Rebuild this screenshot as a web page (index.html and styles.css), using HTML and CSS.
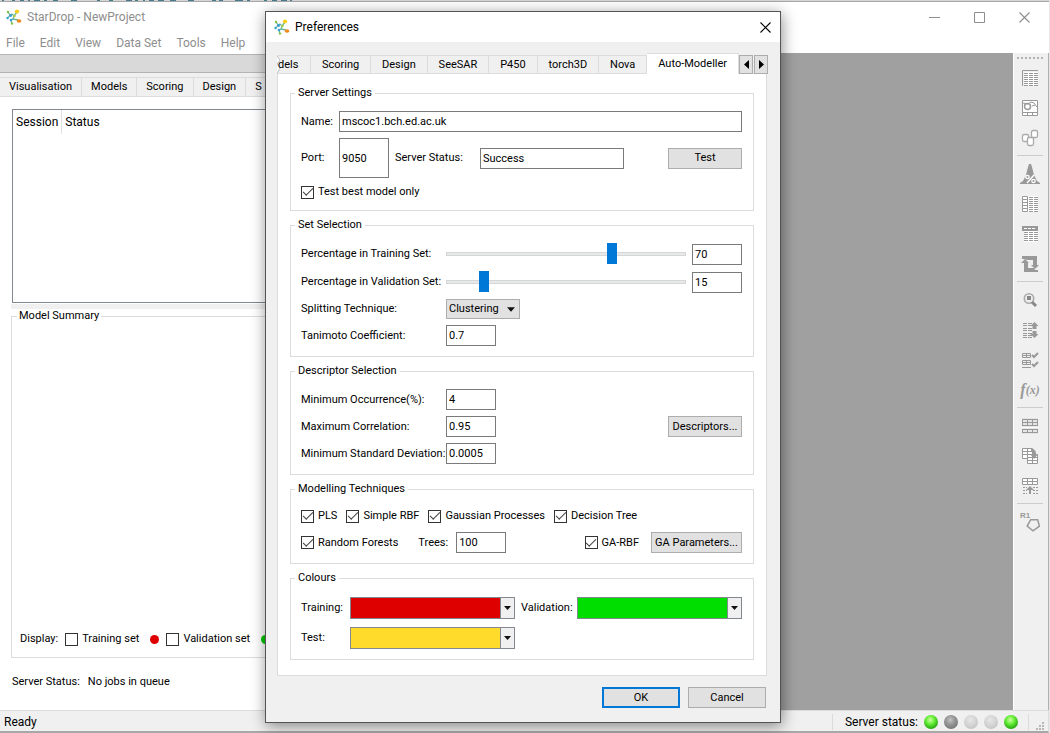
FILE: index.html
```html
<!DOCTYPE html>
<html lang="en">
<head>
<meta charset="utf-8">
<title>StarDrop - NewProject</title>
<link rel="stylesheet" href="styles.css">
</head>
<body>
<svg class="defs" aria-hidden="true">
  <defs>
    <symbol id="logo" viewBox="0 0 16 16">
      <path d="M4 6l2-1 2 2-1 3-2 1M8 7l3-4M7 10l5 1M5 11l1 4M4 6L2 3M4 6L2 9" fill="none" stroke="#6ab8a0" stroke-width="1.3"/>
      <ellipse cx="11" cy="2.500" rx="2.200" ry="2" fill="#f5cf1c"/>
      <ellipse cx="13" cy="12" rx="2.4" ry="1.7" fill="#f08c1e"/>
      <circle cx="2" cy="3" r="1.2" fill="#7ac143"/><circle cx="1.6" cy="9" r="1.2" fill="#2fa6c8"/>
      <circle cx="6" cy="14.600" r="1.200" fill="#8cc63f"/><circle cx="4.500" cy="6.500" r="1.500" fill="#3a9fd0"/>
      <circle cx="5" cy="11" r="1.300" fill="#3a9fd0"/><circle cx="8.500" cy="7" r="1.200" fill="#b5cc34"/>
    </symbol>
    <symbol id="down" viewBox="0 0 9 5"><path d="M0 0h9L4.500 5z" fill="#111"/></symbol>
    <symbol id="close" viewBox="0 0 11 11"><path d="M.5.500l10 10M10.500.500l-10 10" fill="none" stroke="currentColor" stroke-width="1.100"/></symbol>
    <radialGradient id="green" cx=".45" cy=".35" r=".6"><stop offset="0" stop-color="#d2ffa8"/><stop offset=".5" stop-color="#66ee38"/><stop offset="1" stop-color="#2fae14"/></radialGradient>
    <radialGradient id="grey" cx=".45" cy=".35" r=".6"><stop offset="0" stop-color="#c4c4c4"/><stop offset=".5" stop-color="#999"/><stop offset="1" stop-color="#7c7c7c"/></radialGradient>
    <radialGradient id="pale" cx=".45" cy=".35" r=".6"><stop offset="0" stop-color="#e6e6e6"/><stop offset=".6" stop-color="#d6d6d6"/><stop offset="1" stop-color="#c8c8c8"/></radialGradient>
  </defs>
</svg>

<div class="app">
  <div class="backdrop"><svg class="backdrop-marks" viewBox="0 0 360 1" aria-hidden="true"><path d="M2 .5h2m8 0h3m5 0h4m4 0h2m4 0h6m4 0h3m6 0h5m13 0h6m20 0h3m9 0h4m13 0h6m3 0h3m5 0h2m4 0h5m4 0h6m6 0h6m12 0h6m18 0h4m3 0h4m12 0h8m4 0h3m14 0h3m5 0h5m4 0h6m3 0h2" stroke="#467b8f"/></svg></div>
  <header class="titlebar">
    <svg class="logo"><use href="#logo"/></svg>
    <h1 class="title">StarDrop - NewProject</h1>
    <div class="window-buttons">
      <button class="window-button" aria-label="Minimise"><svg width="11" height="11"><path d="M0 5.500h11" stroke="currentColor"/></svg></button>
      <button class="window-button" aria-label="Maximise"><svg width="11" height="11"><path d="M.5.500h10v10H.5z" fill="none" stroke="currentColor"/></svg></button>
      <button class="window-button" aria-label="Close"><svg width="11" height="11"><use href="#close"/></svg></button>
    </div>
  </header>
  <nav class="menu">
    <button>File</button><button>Edit</button><button>View</button><button>Data Set</button><button>Tools</button><button>Help</button>
  </nav>

  <div class="workspace">
    <section class="panel">
      <div class="panel-toolbar"></div>
      <div class="panel-tabs">
        <button>Visualisation</button><button>Models</button><button>Scoring</button><button>Design</button><button>S</button>
      </div>
      <div class="panel-body">
        <div class="sessions">
          <table class="session-table"><thead><tr><th>Session</th><th>Status</th></tr></thead></table>
        </div>
        <div class="splitter"></div>
        <fieldset class="summary">
          <legend>Model Summary</legend>
          <div class="display-row">
            <span>Display:</span>
            <label class="check"><input type="checkbox">Training set</label><i class="dot dot-red"></i>
            <label class="check"><input type="checkbox">Validation set</label><i class="dot dot-green"></i>
          </div>
        </fieldset>
        <p class="queue"><span>Server Status:</span><span>No jobs in queue</span></p>
      </div>
    </section>
    <div class="mdi"></div>
    <aside class="tools">
      <svg class="grip" viewBox="0 0 28 4"><path d="M1 2h28" stroke="#b4b4b4" stroke-width="2" stroke-dasharray="2 2"/></svg>
      <button aria-label="Table"><svg viewBox="0 0 20 20"><path d="M4 4h14v14H4z" fill="#fff"/><path d="M2.500 18V2.500H18" fill="none" stroke="#999"/><path d="M4 5.500h14M4 7.500h14M4 9.500h14M4 11.500h14M4 13.500h14M4 15.500h14M4 17.500h14" stroke="#999" stroke-dasharray="4 1"/></svg></button>
      <button aria-label="Chart"><svg viewBox="0 0 20 20"><path d="M2.500 2.500h15v15h-15zM2.500 14.500h15M7.500 15v3M12.500 15v3" fill="#fff" stroke="#999"/><circle cx="7.500" cy="8.500" r="3" fill="none" stroke="#999" stroke-width="1.500"/><path d="M3 5l5 1 3-2 3 1 3 4M12 8l3-1" fill="none" stroke="#999"/></svg></button>
      <button aria-label="Cards"><svg viewBox="0 0 20 20"><g fill="#fff" stroke="#aaa" stroke-width="1.300"><rect x="2.500" y="6.500" width="6" height="7" rx="1.500"/><rect x="11.500" y="2.500" width="6" height="7" rx="1.500"/><rect x="7.500" y="9.500" width="6" height="8" rx="1.500"/></g></svg></button>
      <hr>
      <button aria-label="Distribution"><svg viewBox="0 0 20 20"><path d="M0 20h20v-1l-3-2-3-6-2-8-1-3H9L8 3 6 11l-3 6-3 2z" fill="#999"/><path d="M7 19l7-8" stroke="#fff" stroke-width="1.500"/><circle cx="7.500" cy="13" r="1.700" fill="none" stroke="#fff" stroke-width="1.300"/><circle cx="13.500" cy="17" r="1.700" fill="none" stroke="#fff" stroke-width="1.300"/></svg></button>
      <button aria-label="Columns"><svg viewBox="0 0 20 20"><path d="M2 2h16v16H2z" fill="#fff"/><path d="M2.500 2.500h5v15h-5zM3 5.500h4M3 8.500h4M3 11.500h4M3 14.500h4" fill="none" stroke="#999"/><path d="M9 3.500h9M9 5.500h9M9 7.500h9M9 9.500h9M9 11.500h9M9 13.500h9M9 15.500h9M9 17.500h9" stroke="#999" stroke-dasharray="4 1"/></svg></button>
      <button aria-label="Header row"><svg viewBox="0 0 20 20"><path d="M4 7h14v11H4z" fill="#fff"/><path d="M2 2h16v5H2z" fill="#999"/><path d="M4 4.500h12" stroke="#fff" stroke-dasharray="3 1"/><path d="M4 8.500h14M4 10.500h14M4 12.500h14M4 14.500h14M4 16.500h14" stroke="#999" stroke-dasharray="4 1"/></svg></button>
      <button aria-label="Swap"><svg viewBox="0 0 20 20"><path d="M2 2h15v9h2l-4 4-4-4h2V6H7L5 5H2zM18 18H4V9H1l4-4 4 4H8v5h6l1 2h3z" fill="#999"/></svg></button>
      <hr>
      <button aria-label="Find"><svg viewBox="0 0 20 20"><circle cx="9" cy="8.500" r="4.700" fill="#eee" stroke="#aaa" stroke-width="1.600"/><path d="M7 6h4v4H7z" fill="#888"/><path d="M12 12l4 4" stroke="#888" stroke-width="3"/></svg></button>
      <button aria-label="Sort"><svg viewBox="0 0 20 20"><path d="M3 3.500h9M3 5.500h9M3 8.500h9M3 10.500h9M3 13.500h9M3 15.500h9M3 17.500h9" stroke="#999" stroke-dasharray="4 1"/><path d="M14.500 2l4 4h-2v3h-4V6h-2zM14.500 18l4-4h-2v-3h-4v3h-2z" fill="#999"/></svg></button>
      <button aria-label="Select rows"><svg viewBox="0 0 20 20"><path d="M2.500 3.500h8v4h-8zM2.500 10.500h8v4h-8zM2 5.500h9M2 12.500h9M6.500 3v5M6.500 10v5M2 17.500h9" fill="none" stroke="#999"/><path d="M12 5l2 2 4-4M12 14l2 2 4-4" fill="none" stroke="#999" stroke-width="2"/></svg></button>
      <button aria-label="Function" class="fx"><i>f</i><i class="fx-arg">(x)</i></button>
      <hr>
      <button aria-label="Split table"><svg viewBox="0 0 20 20"><path d="M2 2h16v16H2z" fill="#fff"/><path d="M2 3.500h16M2 6.500h16M2 9.500h16M2 13.500h16M2 16.500h16" stroke="#999" stroke-width="1.500"/><path d="M2.500 3v7M7.500 3v7M12.500 3v7M17.500 3v7M2.500 13v4M7.500 13v4M12.500 13v4M17.500 13v4" stroke="#999"/></svg></button>
      <button aria-label="Copy table"><svg viewBox="0 0 20 20"><path d="M2.500 2.500h10v10h-10zM2 5.500h10M2 8.500h10M7.500 3v9" fill="#fff" stroke="#999"/><path d="M7.500 8.500h10v9h-10zM8 11.500h10M8 14.500h10M12.500 9v9" fill="#fff" stroke="#999"/><path d="M11 3c4 0 5 2 5 5h2l-4 5-4-5h3c0-2-1-3-2-3z" fill="#999"/></svg></button>
      <button aria-label="Insert row"><svg viewBox="0 0 20 20"><path d="M2.500 2.500h15v6h-15zM2 5.500h16M7.500 2v7M12.500 2v7" fill="#fff" stroke="#999"/><path d="M3 11.500h4M3 14.500h4M3 17.500h4M13 11.500h5M13 14.500h5M13 17.500h5" stroke="#999" stroke-dasharray="2 1"/><path d="M10 10l4 4h-3v4H9v-4H6z" fill="#999"/></svg></button>
      <hr>
      <button aria-label="R-group" class="rgroup"><span>R1</span><svg viewBox="0 0 12 12"><path d="M4 1.500h6L11.500 7 6 11 1 7z" fill="none" stroke="#999" stroke-width="1.300"/></svg></button>
    </aside>
  </div>

  <footer class="statusbar">
    <span class="ready">Ready</span>
    <div class="status-lights">
      <span>Server status:</span>
      <svg viewBox="0 0 94 14" class="lights" role="img" aria-label="Server lights"><circle cx="7" cy="7" r="7" fill="url(#green)"/><circle cx="27" cy="7" r="7" fill="url(#grey)"/><circle cx="47" cy="7" r="7" fill="url(#pale)"/><circle cx="67" cy="7" r="7" fill="url(#pale)"/><circle cx="87" cy="7" r="7" fill="url(#green)"/></svg>
    </div>
    <svg class="resize" viewBox="0 0 9 9"><path d="M6 0h2v2H6zM3 3h2v2H3zM6 3h2v2H6zM0 6h2v2H0zM3 6h2v2H3zM6 6h2v2H6z" fill="#b8b8b8"/></svg>
  </footer>
</div>

<div class="dialog" role="dialog" aria-labelledby="dialog-title">
  <header class="dialog-title">
    <svg class="logo"><use href="#logo"/></svg>
    <h2 class="title" id="dialog-title">Preferences</h2>
    <button class="window-button" aria-label="Close"><svg width="11" height="11"><use href="#close"/></svg></button>
  </header>
  <div class="dialog-body">
    <div class="tabs" role="tablist">
      <button class="tab tab-cut" role="tab"><svg class="tear" viewBox="0 0 4 18"><path d="M0 0l3 4-3 4 3 4-3 6" fill="#fff" stroke="#bbb"/></svg><span>dels</span></button>
      <button class="tab" role="tab">Scoring</button>
      <button class="tab" role="tab">Design</button>
      <button class="tab" role="tab">SeeSAR</button>
      <button class="tab" role="tab">P450</button>
      <button class="tab" role="tab">torch3D</button>
      <button class="tab" role="tab">Nova</button>
      <button class="tab tab-active" role="tab" aria-selected="true">Auto-Modeller</button>
      <div class="scrollers">
        <button aria-label="Scroll left"><svg viewBox="0 0 5 9"><path d="M5 0v9L0 4.500z"/></svg></button>
        <button aria-label="Scroll right"><svg viewBox="0 0 5 9"><path d="M0 0v9l5-4.500z"/></svg></button>
      </div>
    </div>

    <form class="page">
      <fieldset class="group">
        <legend>Server Settings</legend>
        <div class="server-grid">
          <label for="name">Name:</label>
          <input id="name" class="field" value="mscoc1.bch.ed.ac.uk">
          <label for="port">Port:</label>
          <div class="port-row">
            <input id="port" class="field field-tall" value="9050">
            <label class="status-label" for="status">Server Status:</label>
            <input id="status" class="field field-status" value="Success">
            <button type="button" class="button button-side">Test</button>
          </div>
        </div>
        <label class="check check-best"><input type="checkbox" checked>Test best model only</label>
      </fieldset>

      <fieldset class="group">
        <legend>Set Selection</legend>
        <div class="form-grid">
          <label for="training">Percentage in Training Set:</label>
          <div class="slider-row"><input type="range" id="training" class="slider" value="70"><input class="field field-short" value="70" aria-label="Training percentage"></div>
          <label for="validation">Percentage in Validation Set:</label>
          <div class="slider-row"><input type="range" id="validation" class="slider" value="14"><input class="field field-short" value="15" aria-label="Validation percentage"></div>
          <label for="split">Splitting Technique:</label>
          <div class="combo"><select id="split"><option>Clustering</option></select><svg class="combo-arrow"><use href="#down"/></svg></div>
          <label for="tanimoto">Tanimoto Coefficient:</label>
          <input id="tanimoto" class="field field-short" value="0.7">
        </div>
      </fieldset>

      <fieldset class="group">
        <legend>Descriptor Selection</legend>
        <div class="form-grid">
          <label for="occurrence">Minimum Occurrence(%):</label>
          <input id="occurrence" class="field field-short" value="4">
          <label for="correlation">Maximum Correlation:</label>
          <div class="slider-row"><input id="correlation" class="field field-short" value="0.95"><button type="button" class="button button-side">Descriptors...</button></div>
          <label for="deviation">Minimum Standard Deviation:</label>
          <input id="deviation" class="field field-short" value="0.0005">
        </div>
      </fieldset>

      <fieldset class="group group-roomy">
        <legend>Modelling Techniques</legend>
        <div class="techniques">
          <div class="technique-row technique-checks">
            <label class="check"><input type="checkbox" checked>PLS</label>
            <label class="check"><input type="checkbox" checked>Simple RBF</label>
            <label class="check"><input type="checkbox" checked>Gaussian Processes</label>
            <label class="check"><input type="checkbox" checked>Decision Tree</label>
          </div>
          <div class="technique-row">
            <label class="check"><input type="checkbox" checked>Random Forests</label>
            <label class="trees" for="trees">Trees:</label>
            <input id="trees" class="field field-short" value="100">
            <label class="check check-ga"><input type="checkbox" checked>GA-RBF</label>
            <button type="button" class="button button-ga">GA Parameters...</button>
          </div>
        </div>
      </fieldset>

      <fieldset class="group group-roomy">
        <legend>Colours</legend>
        <div class="colours">
          <label for="c-training">Training:</label>
          <div class="swatch swatch-red"><select id="c-training"><option aria-label="Red"></option></select><svg class="swatch-arrow"><use href="#down"/></svg></div>
          <label for="c-validation">Validation:</label>
          <div class="swatch swatch-green"><select id="c-validation"><option aria-label="Green"></option></select><svg class="swatch-arrow"><use href="#down"/></svg></div>
          <label for="c-test">Test:</label>
          <div class="swatch swatch-yellow"><select id="c-test"><option aria-label="Yellow"></option></select><svg class="swatch-arrow"><use href="#down"/></svg></div>
        </div>
      </fieldset>
    </form>

    <div class="actions">
      <button class="button button-action button-default">OK</button>
      <button class="button button-action">Cancel</button>
    </div>
  </div>
</div>
</body>
</html>
```
FILE: styles.css
```css
:root {
  --ui: Roboto, "Noto Sans", sans-serif;
  --face: #f0f0f0;
  --line: #dcdcdc;
  --edge: #7a7a7a;
}
* { box-sizing: border-box; }
body { margin: 0; background: #fff; color: #000; font: 11px/16px var(--ui); overflow: hidden; }
button, input, select { font: inherit; color: inherit; margin: 0; border-radius: 0; }
button { padding: 0; background: none; border: 0; white-space: nowrap; }
svg { display: block; flex: none; }
label, legend, span { white-space: nowrap; }
fieldset { margin: 0; min-width: 0; border: 1px solid var(--line); }
legend { padding: 0 2px; }
.defs { position: absolute; width: 0; height: 0; }

/* Main window */
.app { height: 100vh; display: flex; flex-direction: column; border-right: 1px solid #e8e8e8; background: #fff; }
.backdrop { height: 2px; flex: none; background: #d5d5d5; border-bottom: 1px solid #a8a8a8; }
.backdrop-marks { width: 360px; height: 1px; }
.titlebar { flex: none; height: 30px; display: flex; align-items: center; gap: 5px; padding: 0 2px 0 6px; color: #8e8e8e; }
.logo { width: 16px; height: 16px; }
.title { margin: 0; font: 12px/16px var(--ui); }
.window-buttons { margin-left: auto; display: flex; }
.window-button { width: 45px; height: 28px; display: flex; align-items: center; justify-content: center; }
.menu { flex: none; height: 21px; display: flex; gap: 15px; padding: 0 6px; color: #8e8e8e; font: 12px/22px var(--ui); }
.workspace { flex: 1; min-height: 0; display: flex; border-right: 1px solid #b0b0b0; }
.panel { flex: 1; display: flex; flex-direction: column; min-width: 0; }
.panel-toolbar { height: 19px; flex: none; margin-top: 1px; background: #d9d9d9; border: solid #b4b4b4; border-width: 1px 0; }
.panel-tabs { flex: none; display: flex; padding-top: 4px; background: var(--face); }
.panel-tabs button { height: 20px; padding: 0 9px; border: solid var(--line); border-width: 1px 1px 1px 0; }
.panel-body { flex: 1; display: flex; flex-direction: column; padding: 12px 0 0 11px; }
.sessions { height: 194px; margin-left: 1px; border: 1px solid #828790; }
.session-table { border-collapse: collapse; }
.session-table th { height: 24px; padding: 0 3px; text-align: left; font: 12px/16px var(--ui); }
.session-table th:first-child { border-right: 1px solid #e0e0e0; }
.splitter { height: 5px; margin-top: 1px; background: var(--face); }
.summary { flex: 1; margin-right: 6px; padding: 0 8px 10px; display: flex; flex-direction: column; justify-content: flex-end; }
.summary legend { padding: 0 2px; margin-left: -3px; line-height: 14px; }
.display-row { display: flex; align-items: center; gap: 7px; }
.dot { width: 9px; height: 9px; border-radius: 50%; margin-left: 4px; }
.dot-red { background: #de0000; }
.dot-green { background: #00c800; }
.queue { margin: 16px 0 20px; padding-left: 1px; display: flex; gap: 8px; }
.mdi { flex: 1; background: #a0a0a0; }
.statusbar { flex: none; height: 23px; display: flex; align-items: center; padding: 2px 3px 0 4px; background: var(--face); border: solid var(--line); border-width: 1px 1px 2px 0; border-bottom-color: #a8a8a8; font: 12px/16px var(--ui); }
.status-lights { margin-left: auto; display: flex; align-items: center; gap: 6px; padding: 0 10px 0 12px; border: solid #dadada; border-width: 0 1px; }
.lights { width: 94px; height: 14px; }
.resize { width: 9px; height: 9px; margin-left: 7px; align-self: flex-end; }

/* Tool strip */
.tools { flex: none; width: 35px; padding: 3px 3px 0 1px; display: flex; flex-direction: column; align-items: center; background: var(--face); border-left: 1px solid #fff; color: #999; }
.tools button { width: 30px; height: 30px; flex: none; display: flex; align-items: center; justify-content: center; }
.tools button svg { width: 20px; height: 20px; }
.tools hr { flex: none; width: 26px; height: 1px; margin: 2px 0 3px; border: 0; background: #ccc; }
.grip { width: 28px; height: 4px; margin-bottom: 3px; }
.tools .fx { font: bold 16px/16px "Liberation Serif", serif; }
.tools .fx-arg { font-size: 12px; }
.tools .rgroup { font: bold 8px/8px "Liberation Sans", sans-serif; align-items: flex-start; }
.tools .rgroup span { margin-top: 5px; }
.tools .rgroup svg { width: 14px; height: 14px; margin: 11px 0 0 -4px; }

/* Dialog */
.dialog { position: absolute; left: 265px; top: 11px; width: 516px; border: 1px solid #555; background: var(--face); box-shadow: 1px 3px 14px rgba(0, 0, 0, .45); }
.dialog-title { height: 30px; display: flex; align-items: center; gap: 5px; padding-left: 8px; background: #fff; }
.dialog-title .window-button { width: 30px; margin-left: auto; }
.dialog-body { padding: 12px 13px 14px 11px; }
.tabs { display: flex; align-items: flex-end; height: 20px; margin-bottom: -1px; position: relative; }
.tab { flex: 1 1 auto; height: 19px; border: solid var(--line); border-width: 1px 1px 1px 0; }
.tab-cut { flex: none; width: 34px; display: flex; align-items: center; overflow: hidden; }
.tear { width: 4px; height: 18px; margin-right: -3px; }
.tab-active { height: 21px; background: #fff; border-bottom: 0; }
.scrollers { flex: none; display: flex; gap: 1px; margin-right: -1px; }
.scrollers button { width: 14px; height: 19px; display: flex; align-items: center; justify-content: center; border: 1px solid #adadad; background: #e1e1e1; }
.scrollers svg { width: 5px; height: 9px; }
.page { display: flex; flex-direction: column; gap: 6px; padding: 11px 12px 15px; background: #fff; border: 1px solid var(--line); }
.group { padding: 10px 11px 10px 10px; }
.group-roomy { padding-top: 11px; }
.group legend { margin-left: -6px; padding: 0 3px; }
.field { width: 100%; height: 21px; padding: 0 2px; border: 1px solid var(--edge); background: #fff; }
.field-short { flex: none; width: 50px; }
.field-tall { flex: none; width: 50px; height: 40px; }
.field-status { flex: none; width: 144px; }
.status-label { flex: none; width: 79px; }
.button { height: 21px; border: 1px solid #adadad; background: #e1e1e1; }
.button-side { flex: none; width: 74px; margin-left: auto; }
.server-grid { display: grid; grid-template-columns: 32px 1fr; gap: 6px; align-items: center; }
.port-row { display: flex; align-items: center; gap: 6px; }
.check { display: flex; align-items: center; gap: 4px; }
.check input { appearance: none; flex: none; width: 13px; height: 13px; border: 1px solid #333; background: #fff; display: grid; place-items: center; }
.check input:checked::before { content: ""; width: 9px; height: 4px; margin-top: -3px; border: solid #444; border-width: 0 0 1px 1px; transform: rotate(-45deg); }
.check-best { margin-top: 6px; }
.form-grid { display: grid; grid-template-columns: 139px 1fr; gap: 6px; align-items: center; }
.slider-row { display: flex; align-items: center; gap: 6px; }
.slider { appearance: none; flex: 1; min-width: 0; height: 22px; background: none; }
.slider::-webkit-slider-runnable-track { height: 4px; background: #e7eaea; border: 1px solid #d6d6d6; }
.slider::-webkit-slider-thumb { appearance: none; width: 10px; height: 21px; margin-top: -10px; background: #0078d7; }
.combo { position: relative; width: 74px; }
.combo select { appearance: none; display: block; width: 100%; height: 20px; padding: 0 2px; border: 1px solid #adadad; background: #e1e1e1; }
.combo-arrow { position: absolute; right: 5px; top: 8px; width: 8px; height: 5px; }
.techniques { display: flex; flex-direction: column; gap: 8px; }
.technique-row { display: flex; align-items: center; }
.technique-checks { gap: 9px; }
.trees { margin: 0 8px 0 20px; }
.check-ga { margin-left: auto; }
.button-ga { width: 91px; margin-left: 12px; }
.colours { display: grid; grid-template-columns: 43px 165px 50px 165px; column-gap: 6px; row-gap: 8px; align-items: center; }
.swatch { position: relative; display: flex; }
.swatch select { appearance: none; width: 100%; height: 22px; border: 1px solid #828790; background: linear-gradient(#828790, #828790) right 13px top / 1px 100% no-repeat, linear-gradient(var(--face), var(--face)) right top / 13px 100% no-repeat, var(--fill); }
.swatch-red { --fill: #de0000; }
.swatch-green { --fill: #00de00; }
.swatch-yellow { --fill: #ffdc2b; }
.swatch-arrow { position: absolute; right: 4px; top: 9px; width: 7px; height: 4px; }
.actions { display: flex; justify-content: flex-end; gap: 8px; margin-top: 11px; padding-right: 1px; }
.button-action { width: 78px; }
.button-default { border: 2px solid #0078d7; }
```
